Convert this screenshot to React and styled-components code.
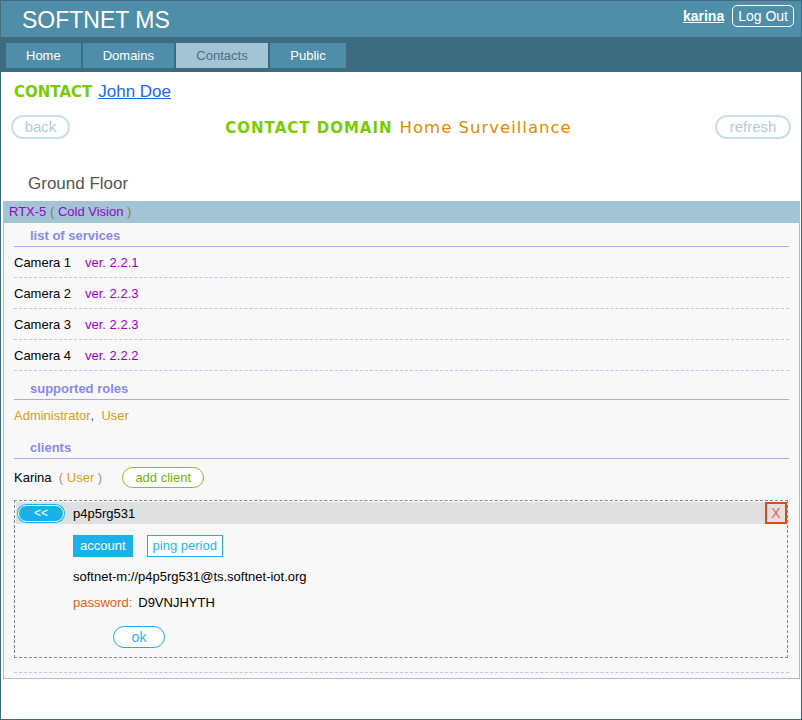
import React from "react";
import styled, { createGlobalStyle } from "styled-components";

const Global = createGlobalStyle`
  html, body { margin: 0; padding: 0; background: #fff; }
  body { font-family: "Liberation Sans", Arial, sans-serif; }
  * { box-sizing: border-box; }
`;

const Frame = styled.div`
  width: 802px;
  height: 720px;
  border: 1px solid #3d6b80;
  background: #fff;
  display: flex;
  flex-direction: column;
  overflow: hidden;
`;

const Header = styled.header`
  height: 36px;
  background: #4f8ea8;
  display: flex;
  align-items: center;
  justify-content: space-between;
  padding: 0 7px 0 21px;
`;

const Brand = styled.div`
  color: #fff;
  font-size: 23px;
  line-height: 36px;
  padding-top: 1px;
`;

const UserBox = styled.div`
  display: flex;
  align-items: center;
  gap: 8px;
  margin-top: -7px;
`;

const UserName = styled.a`
  color: #fff;
  font-weight: bold;
  font-size: 14px;
  text-decoration: underline;
`;

const LogOut = styled.button`
  font-family: inherit;
  background: transparent;
  color: #fff;
  font-size: 14px;
  border: 1px solid #fff;
  border-radius: 5px;
  height: 22px;
  padding: 0 5px;
  line-height: 20px;
`;

const Nav = styled.nav`
  height: 35px;
  background: #3d6b80;
  display: flex;
  gap: 2px;
  padding: 6px 0 0 5px;
`;

const Tab = styled.div`
  height: 25px;
  padding: 0 20px;
  line-height: 25px;
  font-size: 13px;
  color: ${(p) => (p.$active ? "#4a6f82" : "#fff")};
  background: ${(p) => (p.$active ? "#a2c4d4" : "#4f8ea8")};
  text-align: center;
  min-width: ${(p) => p.$w}px;
`;

const ContactLine = styled.div`
  padding: 9px 13px 0;
  height: 31px;
  line-height: 22px;
  display: flex;
  align-items: baseline;
  gap: 6px;
`;

const GreenLabel = styled.span`
  font-family: "DejaVu Sans", Verdana, sans-serif;
  font-weight: bold;
  color: #77cc00;
  font-size: 15px;
  letter-spacing: ${(p) => (p.$spaced ? "1px" : "0")};
`;

const NameLink = styled.a`
  color: #2266ee;
  font-size: 17px;
  text-decoration: underline;
`;

const Toolbar = styled.div`
  margin-top: 12px;
  padding: 0 10px;
  display: flex;
  align-items: center;
  justify-content: space-between;
  height: 24px;
`;

const GhostButton = styled.button`
  font-family: inherit;
  height: 24px;
  border: 2px solid #c8e0ec;
  border-radius: 12px;
  background: #fff;
  color: #b0ccd8;
  font-size: 15px;
  padding: 0;
  width: ${(p) => p.$w}px;
  line-height: 20px;
`;

const DomainTitle = styled.div`
  display: flex;
  align-items: baseline;
  gap: 7px;
  margin-left: 12px;
`;

const DomainName = styled.span`
  font-family: "DejaVu Sans", Verdana, sans-serif;
  color: #e08c00;
  font-size: 16.5px;
  letter-spacing: 1px;
`;

const SiteName = styled.div`
  margin-top: 35px;
  padding-left: 27px;
  font-size: 17px;
  line-height: 20px;
  color: #555;
`;

const Panel = styled.section`
  margin: 7px 1px 0 2px;
`;

const PanelHead = styled.div`
  height: 22px;
  line-height: 22px;
  background: #a2c4d4;
  padding-left: 6px;
  font-size: 13px;
  color: #9900cc;
`;

const Paren = styled.span`
  color: ${(p) => p.$c || "#8a7a5a"};
`;

const PanelBody = styled.div`
  background: #f8f8f8;
  border: 1px solid #a2c4d4;
  border-top: none;
  padding: 0 10px 5px;
`;

const SectionTitle = styled.div`
  margin-top: ${(p) => p.$mt || 0}px;
  padding: 5px 0 2px 16px;
  line-height: 16px;
  font-size: 13px;
  font-weight: bold;
  color: #8888ee;
  border-bottom: 1px solid #aaaaee;
`;

const ServiceRow = styled.div`
  height: 31px;
  display: flex;
  align-items: center;
  font-size: 13px;
  color: #000;
  border-bottom: 1px dashed #c4c4ea;
`;

const ServiceName = styled.span`
  width: 71px;
`;

const Version = styled.span`
  color: #9900cc;
`;

const RolesRow = styled.div`
  height: 30px;
  display: flex;
  align-items: center;
  font-size: 13px;
  color: #555;
`;

const Role = styled.span`
  color: #d4a020;
`;

const ClientItem = styled.div`
  border-bottom: 1px dashed #c4c4ea;
  padding-bottom: 14px;
`;

const ClientRow = styled.div`
  height: 36px;
  display: flex;
  align-items: center;
  font-size: 13px;
  color: #000;
`;

const AddButton = styled.button`
  font-family: inherit;
  margin-left: 20px;
  height: 21px;
  width: 82px;
  border: 1px solid #88c020;
  border-radius: 11px;
  background: #fff;
  color: #70b010;
  font-size: 13px;
  padding: 0;
`;

const ClientBox = styled.div`
  margin-top: 5px;
  border: 1px dashed #888;
  padding: 1px 0 9px 1px;
  margin-right: 1px;
`;

const ClientBar = styled.div`
  height: 22px;
  background: #e0e0e0;
  display: flex;
  align-items: center;
  font-size: 13px;
  color: #000;
`;

const BackPill = styled.button`
  font-family: inherit;
  margin-left: 2px;
  width: 46px;
  height: 17px;
  border: 1px solid #fff;
  box-shadow: 0 0 0 1px #1ab0e8;
  border-radius: 9px;
  background: #1ab0e8;
  color: #fff;
  font-size: 12px;
  padding: 0;
  line-height: 14px;
  margin-right: 9px;
`;

const ClientId = styled.span`
  flex: 1;
`;

const CloseButton = styled.button`
  font-family: inherit;
  width: 22px;
  height: 22px;
  border: 2px solid #e04a10;
  background: transparent;
  color: #f06050;
  font-size: 14px;
  padding: 0;
  line-height: 18px;
`;

const BoxBody = styled.div`
  padding-left: 57px;
`;

const Tabs = styled.div`
  margin-top: 11px;
  display: flex;
  gap: 14px;
`;

const SubTab = styled.div`
  height: 22px;
  line-height: 20px;
  padding: 0 ${(p) => (p.$active ? 6 : 5)}px;
  font-size: 13px;
  border: 1px solid #1ab0e8;
  background: ${(p) => (p.$active ? "#1ab0e8" : "#fff")};
  color: ${(p) => (p.$active ? "#fff" : "#2ab4ec")};
`;

const InfoLine = styled.div`
  margin-top: ${(p) => p.$mt}px;
  line-height: 20px;
  font-size: 13px;
  color: #000;
`;

const Label = styled.span`
  color: #e06010;
  margin-right: 6px;
`;

const OkButton = styled.button`
  font-family: inherit;
  display: block;
  margin: 13px 0 0 40px;
  width: 52px;
  height: 22px;
  border: 1px solid #1ab0e8;
  border-radius: 11px;
  background: #fff;
  color: #2ab4ec;
  font-size: 14px;
  padding: 0;
`;

const services = [
  ["Camera 1", "ver. 2.2.1"],
  ["Camera 2", "ver. 2.2.3"],
  ["Camera 3", "ver. 2.2.3"],
  ["Camera 4", "ver. 2.2.2"],
];

export default function App() {
  return (
    <>
      <Global />
      <Frame>
        <Header>
          <Brand>SOFTNET MS</Brand>
          <UserBox>
            <UserName>karina</UserName>
            <LogOut>Log Out</LogOut>
          </UserBox>
        </Header>
        <Nav>
          <Tab $w={74}>Home</Tab>
          <Tab $w={91}>Domains</Tab>
          <Tab $w={92} $active>Contacts</Tab>
          <Tab $w={76}>Public</Tab>
        </Nav>
        <ContactLine>
          <GreenLabel>CONTACT</GreenLabel>
          <NameLink>John Doe</NameLink>
        </ContactLine>
        <Toolbar>
          <GhostButton $w={59}>back</GhostButton>
          <DomainTitle>
            <GreenLabel $spaced>CONTACT DOMAIN</GreenLabel>
            <DomainName>Home Surveillance</DomainName>
          </DomainTitle>
          <GhostButton $w={76}>refresh</GhostButton>
        </Toolbar>
        <SiteName>Ground Floor</SiteName>
        <Panel>
          <PanelHead>
            RTX-5 <Paren>(</Paren> Cold Vision <Paren>)</Paren>
          </PanelHead>
          <PanelBody>
            <SectionTitle>list of services</SectionTitle>
            {services.map(([n, v]) => (
              <ServiceRow key={n}>
                <ServiceName>{n}</ServiceName>
                <Version>{v}</Version>
              </ServiceRow>
            ))}
            <SectionTitle $mt={5}>supported roles</SectionTitle>
            <RolesRow>
              <Role>Administrator</Role>,&nbsp;&nbsp;<Role>User</Role>
            </RolesRow>
            <SectionTitle $mt={5}>clients</SectionTitle>
            <ClientItem>
              <ClientRow>
                Karina&nbsp;&nbsp;<Paren $c="#b09060">(</Paren>&nbsp;<Role>User</Role>&nbsp;<Paren $c="#b09060">)</Paren>
                <AddButton>add client</AddButton>
              </ClientRow>
              <ClientBox>
                <ClientBar>
                  <BackPill>&lt;&lt;</BackPill>
                  <ClientId>p4p5rg531</ClientId>
                  <CloseButton>X</CloseButton>
                </ClientBar>
                <BoxBody>
                  <Tabs>
                    <SubTab $active>account</SubTab>
                    <SubTab>ping period</SubTab>
                  </Tabs>
                  <InfoLine $mt={10}>softnet-m://p4p5rg531@ts.softnet-iot.org</InfoLine>
                  <InfoLine $mt={6}>
                    <Label>password:</Label>D9VNJHYTH
                  </InfoLine>
                  <OkButton>ok</OkButton>
                </BoxBody>
              </ClientBox>
            </ClientItem>
          </PanelBody>
        </Panel>
      </Frame>
    </>
  );
}
